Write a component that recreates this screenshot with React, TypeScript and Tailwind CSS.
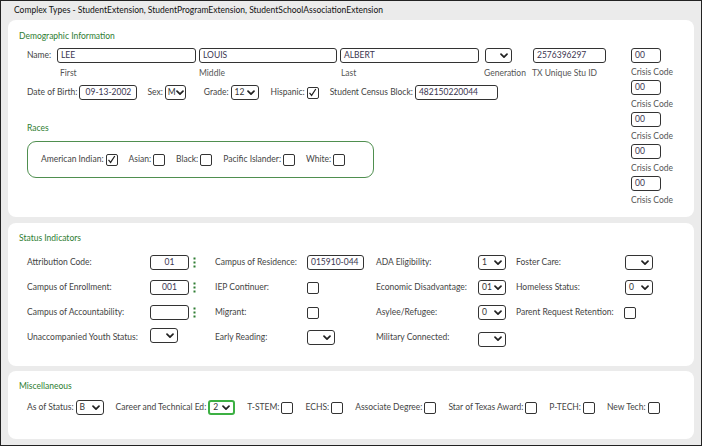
import React from 'react';

const Chevron = () => (
  <svg width="8" height="6" viewBox="0 0 8 6" className="shrink-0">
    <path d="M1 1.2 L4 4.2 L7 1.2" fill="none" stroke="#222" strokeWidth="1.7" strokeLinecap="round" strokeLinejoin="round" />
  </svg>
);

const Select = ({ value = '', w, green = false, tight = false }: { value?: string; w: number; green?: boolean; tight?: boolean }) => (
  <div
    className={`h-[15px] shrink-0 flex items-center justify-between rounded-[3px] bg-white text-[#333] whitespace-nowrap ${
      tight ? 'pl-[2px] pr-[2px]' : 'pl-[3px] pr-[3px]'
    } ${green ? 'border-2 border-[#3cb043]' : 'border border-[#333]'}`}
    style={{ width: w }}
  >
    <span className="leading-none">{value}</span>
    <Chevron />
  </div>
);

const Input = ({ value = '', w, center = false }: { value?: string; w: number; center?: boolean }) => (
  <div
    className={`h-[15px] shrink-0 flex items-center px-[3px] border border-[#333] rounded-[3px] bg-white text-[#3a3550] leading-none whitespace-nowrap overflow-hidden ${
      center ? 'justify-center' : ''
    }`}
    style={{ width: w }}
  >
    {value}
  </div>
);

const Check = ({ checked = false }: { checked?: boolean }) => (
  <div className="w-[12px] h-[12px] border border-[#333] rounded-[2px] bg-white flex items-center justify-center shrink-0">
    {checked && (
      <svg width="9" height="9" viewBox="0 0 9 9">
        <path d="M1.5 4.8 L3.6 7.4 L7.8 1" fill="none" stroke="#222" strokeWidth="1.2" />
      </svg>
    )}
  </div>
);

const Dots = () => (
  <svg width="3" height="11" viewBox="0 0 3 11" className="ml-[4px]">
    <rect x="0.5" y="0.5" width="2" height="2" fill="#2e7d32" />
    <rect x="0.5" y="4.5" width="2" height="2" fill="#2e7d32" />
    <rect x="0.5" y="8.5" width="2" height="2" fill="#2e7d32" />
  </svg>
);

const Header = ({ children }: { children: React.ReactNode }) => (
  <div className="text-[#2e7d32] leading-[12px]">{children}</div>
);

const Labeled = ({ label, children }: { label: string; children: React.ReactNode }) => (
  <div className="flex items-center gap-[2px] whitespace-nowrap">
    <span>{label}</span>
    {children}
  </div>
);

const CrisisCode = () => (
  <div className="h-[32px] flex flex-col">
    <Input value="00" w={30} />
    <div className="mt-[3px] leading-[12px] text-[#555]">Crisis Code</div>
  </div>
);

export default function App() {
  return (
    <div
      className="w-[702px] h-[446px] border border-[#222] bg-[#ebebeb] flex flex-col text-[8.5px] text-[#444]"
      style={{ fontFamily: 'Lato, "Open Sans", sans-serif' }}
    >
      <div className="h-[19px] pl-[13px] flex items-center text-[#111]">
        Complex Types - StudentExtension, StudentProgramExtension, StudentSchoolAssociationExtension
      </div>

      {/* Demographic */}
      <div className="mx-[7px] h-[197px] bg-white rounded-[8px] pl-[11px] pt-[10px]">
        <Header>Demographic Information</Header>
        <div className="flex mt-[6px]">
          <div className="w-[604px] pl-[8px]">
            <div className="flex items-center">
              <span className="w-[30px]">Name:</span>
              <Input value="LEE" w={139} />
              <div className="ml-[3px]"><Input value="LOUIS" w={138} /></div>
              <div className="ml-[3px]"><Input value="ALBERT" w={139} /></div>
              <div className="ml-[6px]"><Select w={27} /></div>
              <div className="ml-[21px]"><Input value="2576396297" w={73} /></div>
            </div>
            <div className="flex mt-[4px] leading-[12px] text-[#555] whitespace-nowrap">
              <span className="ml-[33px] w-[139px]">First</span>
              <span className="w-[142px]">Middle</span>
              <span className="w-[143px]">Last</span>
              <span className="w-[48px]">Generation</span>
              <span>TX Unique Stu ID</span>
            </div>
            <div className="flex items-center mt-[6px]">
              <Labeled label="Date of Birth:"><Input value="09-13-2002" w={58} center /></Labeled>
              <div className="ml-[10px]"><Labeled label="Sex:"><Select value="M" w={21} tight /></Labeled></div>
              <div className="ml-[18px]"><Labeled label="Grade:"><Select value="12" w={28} /></Labeled></div>
              <div className="ml-[12px]"><Labeled label="Hispanic:"><Check checked /></Labeled></div>
              <div className="ml-[11px]"><Labeled label="Student Census Block:"><Input value="482150220044" w={83} /></Labeled></div>
            </div>
            <div className="mt-[22px]"><Header>Races</Header></div>
            <div className="mt-[7px] w-[347px] h-[37px] border border-[#4f8f4f] rounded-[9px] flex items-center pl-[13px] gap-[11px]">
              <Labeled label="American Indian:"><Check checked /></Labeled>
              <Labeled label="Asian:"><Check /></Labeled>
              <Labeled label="Black:"><Check /></Labeled>
              <Labeled label="Pacific Islander:"><Check /></Labeled>
              <Labeled label="White:"><Check /></Labeled>
            </div>
          </div>
          <div className="flex flex-col ml-[8px]">
            <CrisisCode />
            <CrisisCode />
            <CrisisCode />
            <CrisisCode />
            <CrisisCode />
          </div>
        </div>
      </div>

      {/* Status */}
      <div className="mx-[7px] mt-[6px] h-[143px] bg-white rounded-[8px] pl-[11px] pt-[9px]">
        <Header>Status Indicators</Header>
        <div className="mt-[6px] ml-[8px] grid grid-cols-[123px_65px_92px_69px_102px_38px_109px_60px] auto-rows-[25px] items-center whitespace-nowrap">
          <span>Attribution Code:</span>
          <div className="flex items-center"><Input value="01" w={39} center /><Dots /></div>
          <span>Campus of Residence:</span>
          <Input value="015910-044" w={57} />
          <span>ADA Eligibility:</span>
          <Select value="1" w={28} />
          <span>Foster Care:</span>
          <Select w={28} />

          <span>Campus of Enrollment:</span>
          <div className="flex items-center"><Input value="001" w={39} center /><Dots /></div>
          <span>IEP Continuer:</span>
          <Check />
          <span>Economic Disadvantage:</span>
          <Select value="01" w={28} />
          <span>Homeless Status:</span>
          <Select value="0" w={28} />

          <span>Campus of Accountability:</span>
          <div className="flex items-center"><Input w={39} /><Dots /></div>
          <span>Migrant:</span>
          <Check />
          <span>Asylee/Refugee:</span>
          <Select value="0" w={28} />
          <span>Parent Request Retention:</span>
          <div className="-ml-[1px]"><Check /></div>

          <span>Unaccompanied Youth Status:</span>
          <div className="-mt-[4px]"><Select w={28} /></div>
          <span>Early Reading:</span>
          <Select w={28} />
          <span>Military Connected:</span>
          <div className="mt-[3px]"><Select w={28} /></div>
          <span />
          <span />
        </div>
      </div>

      {/* Misc */}
      <div className="mx-[7px] mt-[5px] h-[68px] bg-white rounded-[8px] pl-[11px] pt-[9px]">
        <Header>Miscellaneous</Header>
        <div className="mt-[8px] ml-[8px] flex items-center gap-[12px]">
          <Labeled label="As of Status:"><Select value="B" w={28} /></Labeled>
          <Labeled label="Career and Technical Ed:"><Select value="2" w={27} green /></Labeled>
          <Labeled label="T-STEM:"><Check /></Labeled>
          <Labeled label="ECHS:"><Check /></Labeled>
          <Labeled label="Associate Degree:"><Check /></Labeled>
          <Labeled label="Star of Texas Award:"><Check /></Labeled>
          <Labeled label="P-TECH:"><Check /></Labeled>
          <Labeled label="New Tech:"><Check /></Labeled>
        </div>
      </div>
    </div>
  );
}
